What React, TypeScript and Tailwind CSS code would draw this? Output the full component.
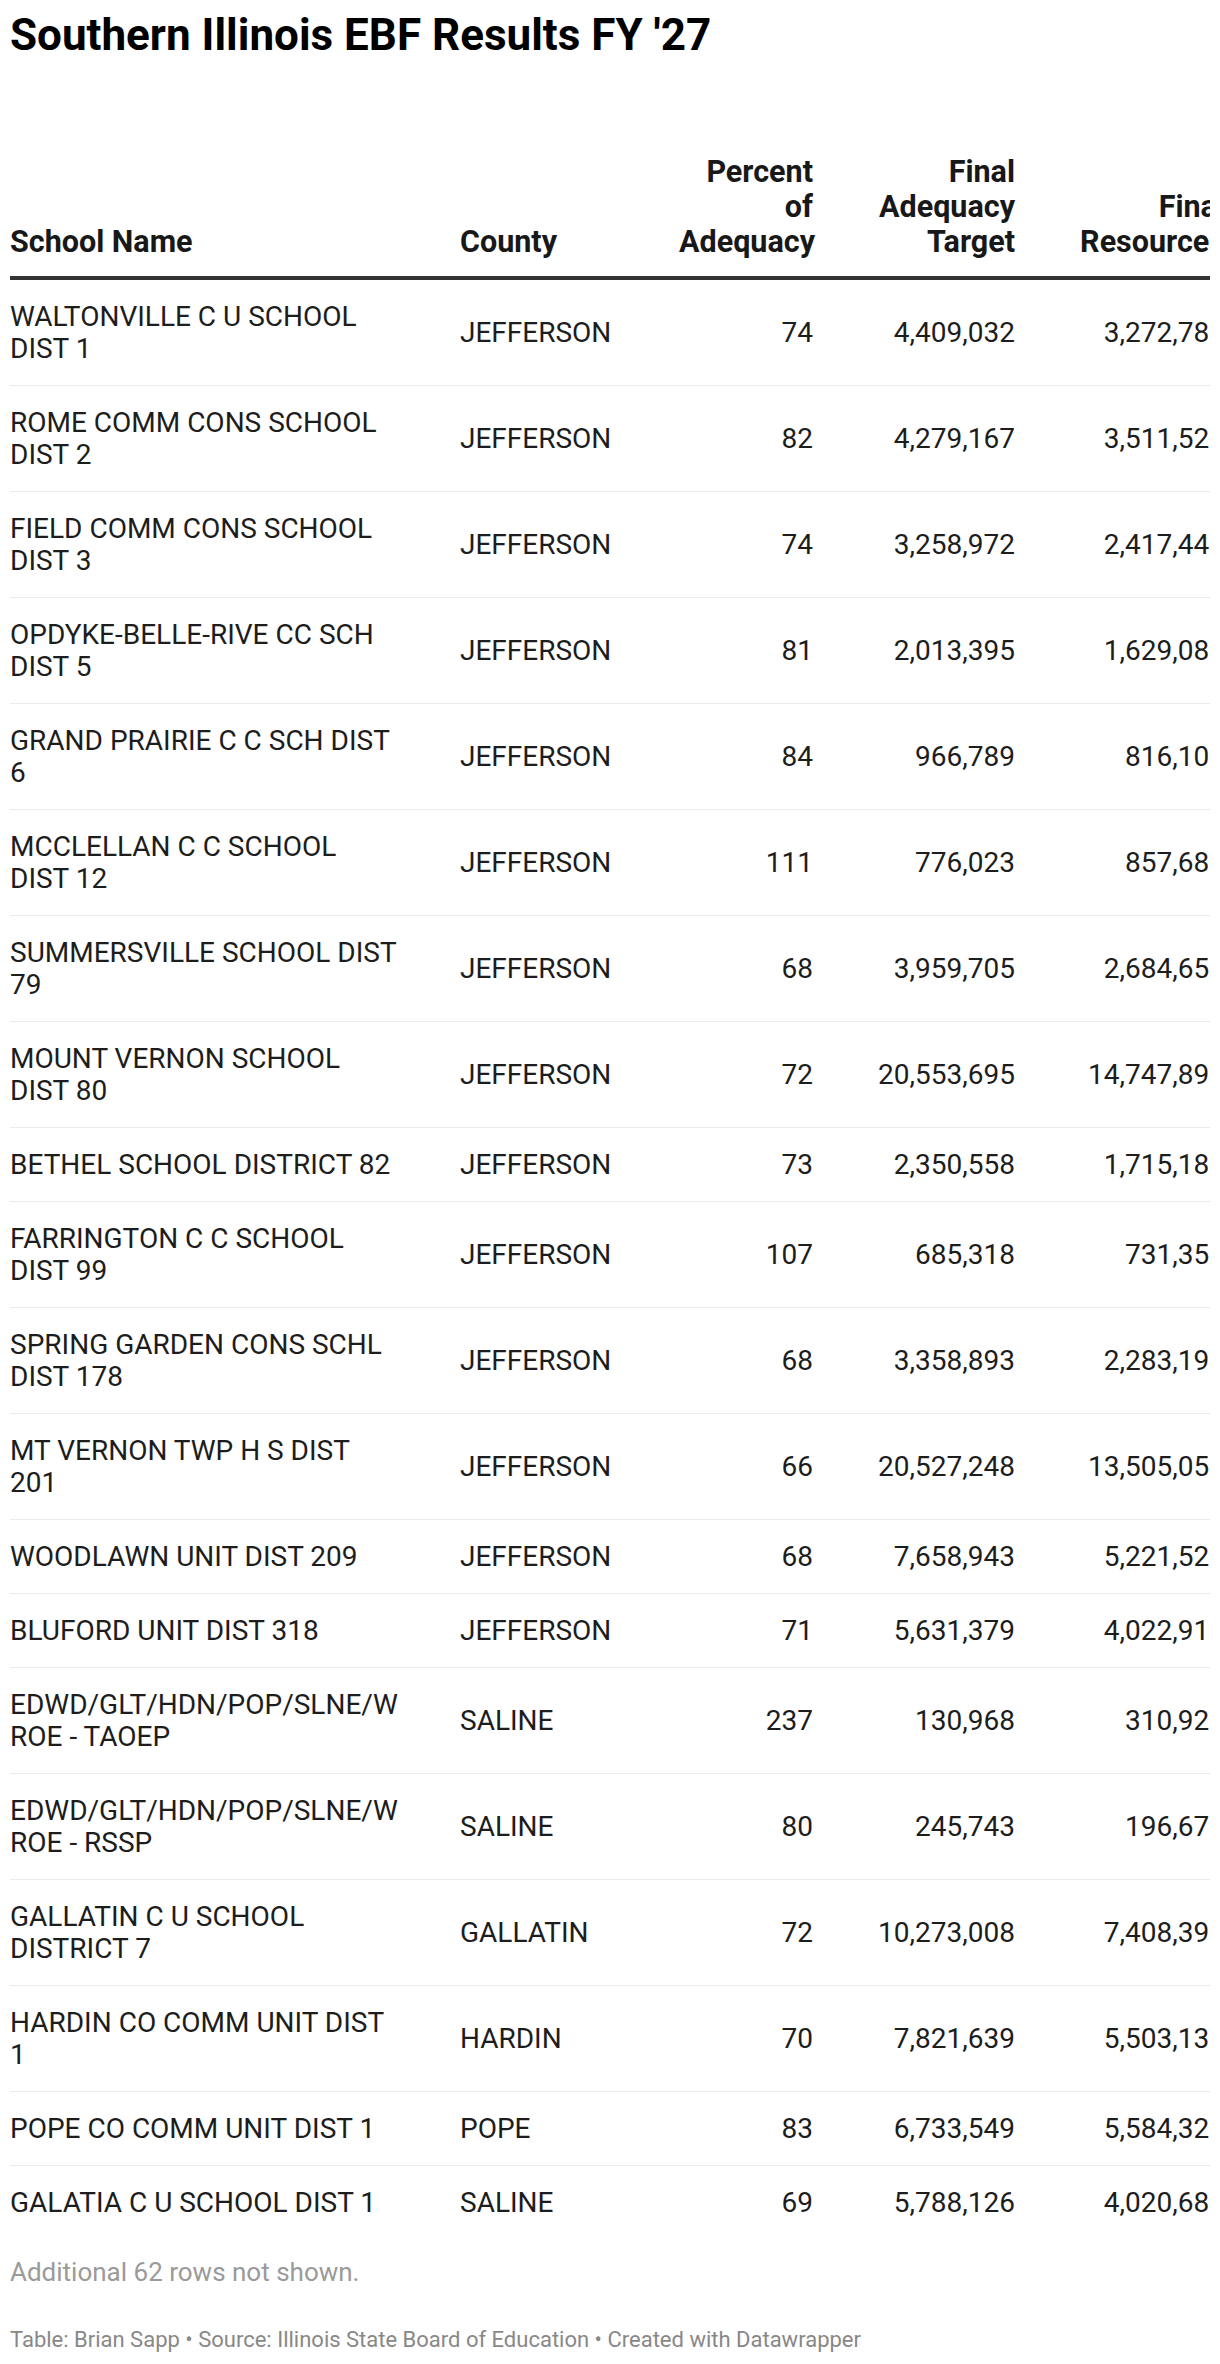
import React from "react";

interface Row {
  name: string;
  county: string;
  pct: string;
  target: string;
  resources: string;
}

// names keep the wrap points of the published table
const rows: Row[] = [
  { name: "WALTONVILLE C U SCHOOL\nDIST 1", county: "JEFFERSON", pct: "74", target: "4,409,032", resources: "3,272,781" },
  { name: "ROME COMM CONS SCHOOL\nDIST 2", county: "JEFFERSON", pct: "82", target: "4,279,167", resources: "3,511,521" },
  { name: "FIELD COMM CONS SCHOOL\nDIST 3", county: "JEFFERSON", pct: "74", target: "3,258,972", resources: "2,417,441" },
  { name: "OPDYKE-BELLE-RIVE CC SCH\nDIST 5", county: "JEFFERSON", pct: "81", target: "2,013,395", resources: "1,629,081" },
  { name: "GRAND PRAIRIE C C SCH DIST\n6", county: "JEFFERSON", pct: "84", target: "966,789", resources: "816,101" },
  { name: "MCCLELLAN C C SCHOOL\nDIST 12", county: "JEFFERSON", pct: "111", target: "776,023", resources: "857,681" },
  { name: "SUMMERSVILLE SCHOOL DIST\n79", county: "JEFFERSON", pct: "68", target: "3,959,705", resources: "2,684,651" },
  { name: "MOUNT VERNON SCHOOL\nDIST 80", county: "JEFFERSON", pct: "72", target: "20,553,695", resources: "14,747,891" },
  { name: "BETHEL SCHOOL DISTRICT 82", county: "JEFFERSON", pct: "73", target: "2,350,558", resources: "1,715,181" },
  { name: "FARRINGTON C C SCHOOL\nDIST 99", county: "JEFFERSON", pct: "107", target: "685,318", resources: "731,351" },
  { name: "SPRING GARDEN CONS SCHL\nDIST 178", county: "JEFFERSON", pct: "68", target: "3,358,893", resources: "2,283,191" },
  { name: "MT VERNON TWP H S DIST\n201", county: "JEFFERSON", pct: "66", target: "20,527,248", resources: "13,505,051" },
  { name: "WOODLAWN UNIT DIST 209", county: "JEFFERSON", pct: "68", target: "7,658,943", resources: "5,221,521" },
  { name: "BLUFORD UNIT DIST 318", county: "JEFFERSON", pct: "71", target: "5,631,379", resources: "4,022,911" },
  { name: "EDWD/GLT/HDN/POP/SLNE/W\nROE - TAOEP", county: "SALINE", pct: "237", target: "130,968", resources: "310,921" },
  { name: "EDWD/GLT/HDN/POP/SLNE/W\nROE - RSSP", county: "SALINE", pct: "80", target: "245,743", resources: "196,671" },
  { name: "GALLATIN C U SCHOOL\nDISTRICT 7", county: "GALLATIN", pct: "72", target: "10,273,008", resources: "7,408,391" },
  { name: "HARDIN CO COMM UNIT DIST\n1", county: "HARDIN", pct: "70", target: "7,821,639", resources: "5,503,131" },
  { name: "POPE CO COMM UNIT DIST 1", county: "POPE", pct: "83", target: "6,733,549", resources: "5,584,321" },
  { name: "GALATIA C U SCHOOL DIST 1", county: "SALINE", pct: "69", target: "5,788,126", resources: "4,020,681" },
];

const th = "p-0 pb-[17px] align-bottom font-bold text-[30.5px] leading-[35px] text-[#181818] border-b-4 border-[#333333]";

export default function App() {
  return (
    <div className="min-h-screen bg-white font-['Roboto','Liberation_Sans',sans-serif]">
      <div className="px-[10px]">
        <h1 className="pt-[8px] text-[44px] leading-[54px] font-bold text-black">
          Southern Illinois EBF Results FY '27
        </h1>

        {/* table scrolls sideways in the original, last column gets cut */}
        <div className="mt-[92px] overflow-hidden">
          <table className="w-[1227px] table-fixed border-separate border-spacing-0">
            <colgroup>
              <col className="w-[438px]" />
              <col className="w-[219px]" />
              <col className="w-[158px]" />
              <col className="w-[202px]" />
              <col className="w-[210px]" />
            </colgroup>
            <thead>
              <tr>
                <th className={`${th} pr-[36px] text-left`}>School Name</th>
                <th className={`${th} px-[12px] text-left`}>County</th>
                <th className={`${th} px-[12px] text-right`}>
                  Percent
                  <br />
                  of
                  <br />
                  Adequacy
                </th>
                <th className={`${th} px-[12px] text-right`}>
                  Final
                  <br />
                  Adequacy
                  <br />
                  Target
                </th>
                <th className={`${th} px-[12px] text-right whitespace-nowrap`}>
                  Final
                  <br />
                  Resources
                </th>
              </tr>
            </thead>
            <tbody className="text-[28px] leading-[32px] text-[#1d1d1d]">
              {rows.map((r, i) => {
                const last = i === rows.length - 1;
                const cell = `py-[20.5px] align-middle ${last ? "" : "border-b border-[#ebebeb]"}`;
                return (
                  <tr key={r.name}>
                    <td className={`${cell} pr-[12px] text-left whitespace-pre-line`}>{r.name}</td>
                    <td className={`${cell} px-[12px] text-left`}>{r.county}</td>
                    <td className={`${cell} px-[12px] text-right`}>{r.pct}</td>
                    <td className={`${cell} px-[12px] text-right`}>{r.target}</td>
                    <td className={`${cell} px-[12px] text-right whitespace-nowrap`}>{r.resources}</td>
                  </tr>
                );
              })}
            </tbody>
          </table>
        </div>

        <p className="mt-[17px] text-[26px] leading-[32px] text-[#9a9a9a]">Additional 62 rows not shown.</p>
        <p className="mt-[39px] text-[22px] leading-[25px] text-[#888888]">
          Table: Brian Sapp • Source: Illinois State Board of Education • Created with Datawrapper
        </p>
      </div>
    </div>
  );
}
